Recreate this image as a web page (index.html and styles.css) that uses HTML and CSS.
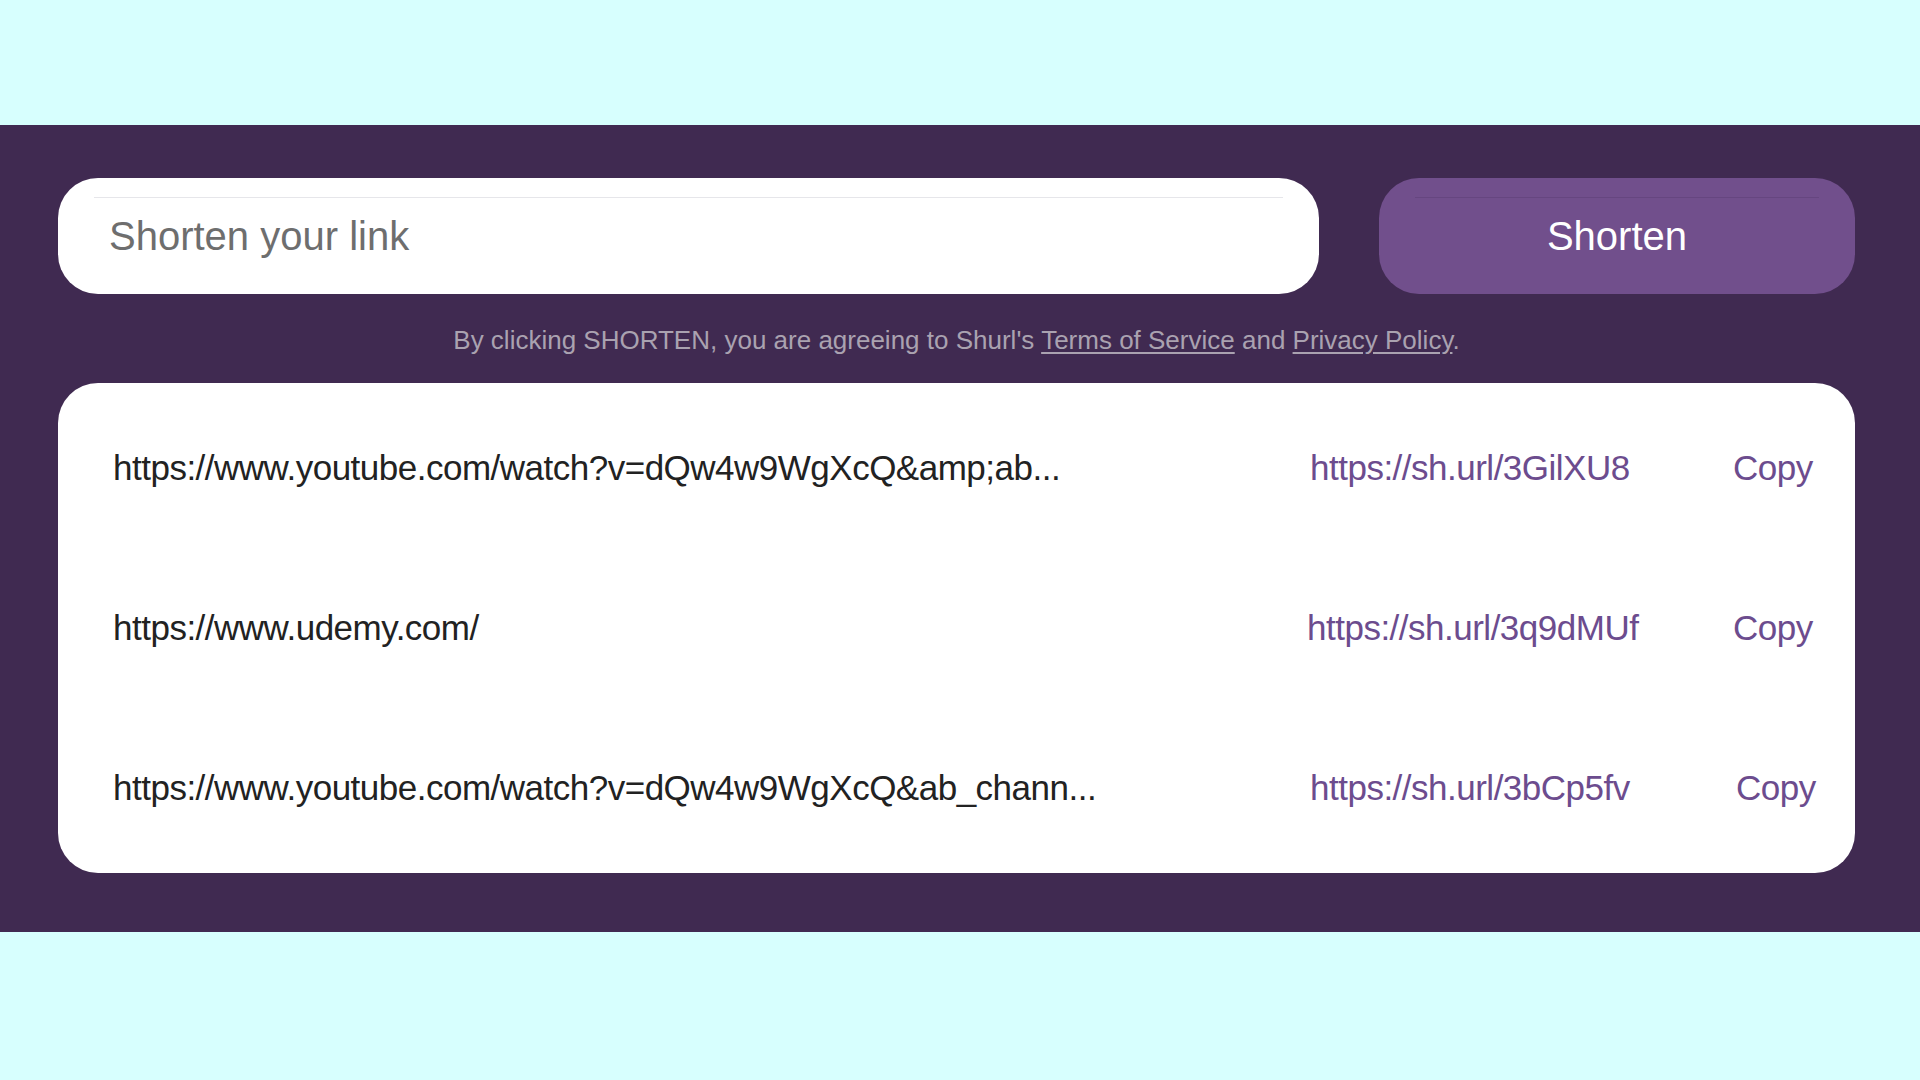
FILE: index.html
```html
<!DOCTYPE html>
<html lang="en">
<head>
<meta charset="utf-8">
<title>Shurl</title>
<link rel="stylesheet" href="styles.css">
</head>
<body>
<div class="top-space"></div>
<section class="band">
  <form class="shorten-row">
    <div class="input-box">
      <input class="link-input" type="text" placeholder="Shorten your link">
    </div>
    <button class="shorten-btn" type="button">Shorten</button>
  </form>
  <p class="disclaimer">By clicking SHORTEN, you are agreeing to Shurl's <a href="#">Terms of Service</a> and <a href="#">Privacy Policy</a>.</p>
  <div class="results">
    <div class="result-row">
      <span class="long-url">https://www.youtube.com/watch?v=dQw4w9WgXcQ&amp;amp;ab...</span>
      <a class="short-url" href="#">https://sh.url/3GilXU8</a>
      <a class="copy" href="#">Copy</a>
    </div>
    <div class="result-row">
      <span class="long-url">https://www.udemy.com/</span>
      <a class="short-url shift-left" href="#">https://sh.url/3q9dMUf</a>
      <a class="copy" href="#">Copy</a>
    </div>
    <div class="result-row">
      <span class="long-url">https://www.youtube.com/watch?v=dQw4w9WgXcQ&amp;ab_chann...</span>
      <a class="short-url" href="#">https://sh.url/3bCp5fv</a>
      <a class="copy shift-right" href="#">Copy</a>
    </div>
  </div>
</section>
<div class="bottom-space"></div>
</body>
</html>
```
FILE: styles.css
```css
* { box-sizing: border-box; }
html, body {
  margin: 0;
  padding: 0;
}
body {
  background: #d7fffe;
  font-family: "Liberation Sans", Arial, sans-serif;
  width: 1920px;
  height: 1080px;
  overflow: hidden;
}
.top-space { height: 125px; }
.bottom-space { height: 148px; }
.band {
  background: #402a51;
  height: 807px;
  padding: 53px 65px 0 58px;
}
.shorten-row {
  display: flex;
  gap: 60px;
  margin: 0;
  height: 116px;
}
.input-box {
  position: relative;
  flex: 1;
  background: #fff;
  border-radius: 40px;
  display: flex;
  align-items: center;
  padding-left: 51px;
}
.input-box::before {
  content: "";
  position: absolute;
  left: 36px;
  right: 36px;
  top: 19px;
  height: 1px;
  background: #e6e6ea;
}
.link-input {
  border: 0;
  outline: 0;
  background: transparent;
  font-family: inherit;
  font-size: 40px;
  color: #333;
  width: 100%;
  padding: 0;
}
.link-input::placeholder { color: #6e6e6e; }
.shorten-btn {
  position: relative;
  width: 476px;
  background: #714f8c;
  border: 0;
  border-radius: 40px;
  color: #fff;
  font-family: inherit;
  font-size: 40px;
  padding: 0;
  cursor: pointer;
}
.shorten-btn::before {
  content: "";
  position: absolute;
  left: 36px;
  right: 36px;
  top: 19px;
  height: 1px;
  background: #664680;
}
.disclaimer {
  margin: 0;
  height: 89px;
  line-height: 92px;
  text-align: center;
  font-size: 26px;
  color: #aaa2b0;
  white-space: nowrap;
}
.disclaimer a {
  color: #aaa2b0;
  text-decoration: underline;
  text-underline-offset: 3px;
}
.results {
  background: #fff;
  border-radius: 40px;
  height: 490px;
  padding: 5px 0 5px 55px;
}
.result-row {
  height: 160px;
  display: grid;
  grid-template-columns: 1197px 423px auto;
  align-items: center;
  font-size: 35px;
  letter-spacing: -0.5px;
}
.long-url { color: #222; white-space: nowrap; }
.short-url, .copy {
  color: #6c4c8e;
  text-decoration: none;
  white-space: nowrap;
}
.shift-left { margin-left: -3px; }
.shift-right { margin-left: 3px; }
```
